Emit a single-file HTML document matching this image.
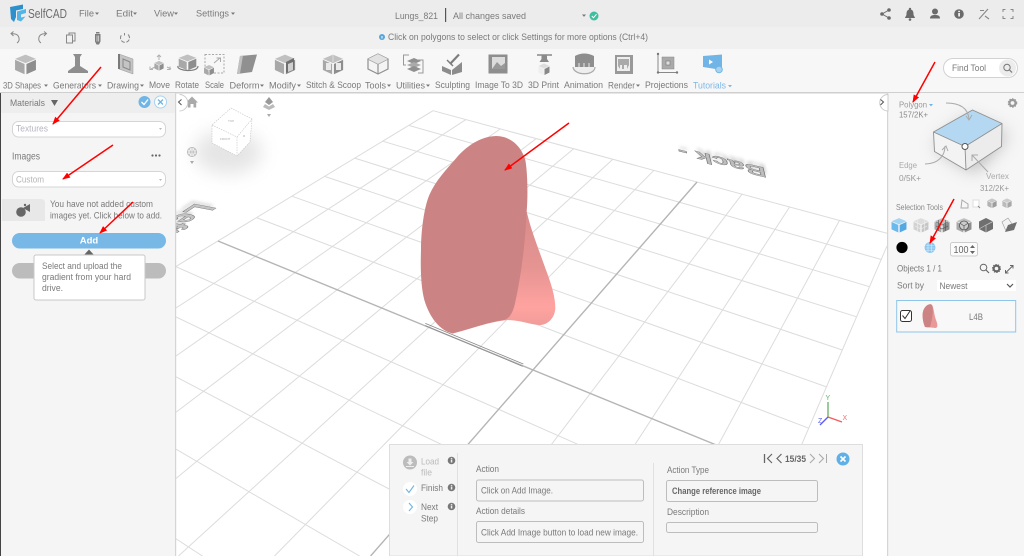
<!DOCTYPE html>
<html><head><meta charset="utf-8"><title>SelfCAD</title>
<style>
html,body{margin:0;padding:0;width:1024px;height:556px;overflow:hidden;background:#fff}
svg{display:block;filter:blur(.35px)}
text{font-family:"Liberation Sans",sans-serif;font-size:9.5px;fill:#7a7a7a}
.m{font-size:9px;fill:#7a7a7a}
.s{fill:#888;stroke:none}
.l{stroke:#dcdcdc;stroke-width:1;fill:none}
.k{stroke:#b5b5b5;stroke-width:1.4;fill:none}
.o{fill:none;stroke:#888;stroke-width:1.2}
</style></head><body>
<svg width="1024" height="556" viewBox="0 0 1024 556" xmlns="http://www.w3.org/2000/svg">
<defs>
<marker id="ah" markerWidth="8" markerHeight="6" refX="7" refY="3" orient="auto" markerUnits="userSpaceOnUse"><path d="M0 0L8 3L0 6Z" fill="#f00"/></marker>
<filter id="b3" x="-100%" y="-100%" width="300%" height="300%"><feGaussianBlur stdDeviation="9"/></filter>
<filter id="b1" x="-30%" y="-30%" width="160%" height="160%"><feGaussianBlur stdDeviation="1.5"/></filter>
<linearGradient id="lg" x1="0" y1="0" x2="0" y2="1"><stop offset="0" stop-color="#d98c8a"/><stop offset=".45" stop-color="#e59492"/><stop offset=".78" stop-color="#ffa3a0"/><stop offset="1" stop-color="#e99997"/></linearGradient>
<clipPath id="cc"><rect x="176" y="93" width="711" height="463"/></clipPath>
<g id="cube"><path d="M0-11L11-6L0-1L-11-6Z" fill="#c0c0c0"/><path d="M-11-5L-1 0V12L-11 7Z" fill="#a8a8a8"/><path d="M11-5L1 0V12L11 7Z" fill="#8e8e8e"/></g>
<g id="caret"><path d="M-2-1H2L0 1.4Z" fill="#777"/></g>
<g id="inf"><circle r="3.8" fill="#777"/><rect x="-.7" y="-1" width="1.5" height="3" fill="#eee"/><rect x="-.7" y="-2.6" width="1.5" height="1" fill="#eee"/></g>
</defs>

<!-- canvas -->
<rect x="176" y="93" width="711" height="463" fill="#fff"/>
<g clip-path="url(#cc)">
<path class="l" d="M433 110.7L887 233.3M408.7 125.4L881.2 259.5M382.7 141.2L869.5 286.7M354.7 158.1L856.6 316.8M324.6 176.4L842.3 350M291.9 196.2L826.5 386.9M256.5 217.6L808.7 428.2M176 266.7L766.1 527.6M176 316.9L673.5 556M176 376.8L516.5 556M176 449.2L359.6 556M176 538.8L202.4 556"/>
<path class="l" d="M433 110.7L176 266.4M465.9 119.6L176 308M500.3 128.9L176 356M536.2 138.6L176 412.2M573.7 148.7L176 478.5M612.9 159.3L178.5 556M653.9 170.3L274.5 556M742.1 194.1L466.5 556M789.6 207L562.4 556M839.5 220.4L658.3 556M887 246L753.8 556"/>
<path class="k" d="M218 241L788.7 474.7M697 182L370.6 556"/>
<!-- back / left labels -->
<g filter="url(#b1)" opacity=".45"><text transform="matrix(-2.45 -.6 -.3 -1.2 766 165)" style="font-size:12px;font-weight:bold;fill:#999">Back -</text></g>
<text transform="matrix(-2.45 -.6 -.3 -1.2 765 168)" style="font-size:12px;font-weight:bold;fill:#bdbdbd;stroke:#6f6f6f;stroke-width:.3">Back -</text>
<g filter="url(#b1)" opacity=".4"><text transform="matrix(-1.9 1.25 -2.6 -.5 194 200)" style="font-size:12px;font-weight:bold;fill:#999">Left</text></g>
<text transform="matrix(-1.9 1.25 -2.6 -.5 196 203)" style="font-size:12px;font-weight:bold;fill:#c4c4c4;stroke:#6f6f6f;stroke-width:.22">Left</text>
<!-- view cube -->
<ellipse cx="228" cy="152" rx="34" ry="22" fill="#bbb" opacity=".38" filter="url(#b3)"/>
<g stroke="#c4c4c4" stroke-width=".6" stroke-dasharray="1.5 1" fill="#fff"><path d="M231 108L252 119L250 142L237 156L212 143L212 125Z"/><path d="M212 125L237 137L252 119M237 137V156" fill="none"/></g>
<text x="228" y="122" style="font-size:3px;fill:#aaa">TOP</text><text x="220" y="140" style="font-size:3px;fill:#aaa">FRONT</text><text x="243" y="137" style="font-size:3px;fill:#aaa">R</text>
<!-- nav icons -->
<path d="M192 96.5L198 102.5H196.2V107.5H193.5V104H190.5V107.5H187.8V102.5H186Z" fill="#aaa"/>
<g><path d="M269 97L273 102L269 105L265 102Z" fill="#999"/><path d="M265 104L269 106.500L273 104L275 107L269 110L263 107Z" fill="#bbb"/><path d="M267 114H271L269 117Z" fill="#aaa"/></g>
<circle cx="192" cy="152" r="4.5" fill="none" stroke="#bbb"/><path d="M187.500 152H196.500M192 147.500V156.500M189 148.500Q192 152 189 155.500M195 148.500Q192 152 195 155.500" stroke="#bbb" stroke-width=".7" fill="none"/><path d="M190 161H194L192 164Z" fill="#aaa"/>
<!-- lung -->
<g transform="translate(176 90) scale(.33333)">
<path d="M1052 365C1065 420 1085 470 1110 540C1125 580 1138 620 1138 655C1136 685 1115 705 1090 705C1060 703 1030 690 995 690C940 695 880 718 825 732L1000 640Z" fill="url(#lg)"/>
<path d="M830 730C790 722 760 680 745 630C735 590 733 540 735 480C735 420 745 350 760 315C780 270 810 240 840 205C870 170 910 140 960 138C1000 138 1035 165 1048 210C1055 250 1056 320 1052 365C1048 460 1035 560 1017 640C1010 670 1000 685 985 690C940 695 880 718 830 730Z" fill="#cc8383"/>
<path d="M748 700L1042 822M748 707L1040 829" stroke="#8a8a8a" stroke-width="2.400" fill="none"/>
</g>
<!-- axes -->
<path d="M828 417V402" stroke="#62b062" stroke-width="1.300"/><path d="M828 417L842 422" stroke="#f25c5c" stroke-width="1.300"/><path d="M828 417L820 425" stroke="#5c5cf2" stroke-width="1.300"/>
<text x="825.500" y="400" style="font-size:7px;fill:#62b062">Y</text><text x="842.500" y="420" style="font-size:7px;fill:#f47070">X</text><text x="818" y="423" style="font-size:7px;fill:#6262f0">Z</text>
</g>

<!-- top bars -->
<rect width="1024" height="27" fill="#ececec"/>
<rect y="27" width="1024" height="22" fill="#f0f0f0"/>
<rect y="49" width="1024" height="43" fill="#f7f7f7"/>
<rect y="92" width="1024" height="1.500" fill="#cfcfcf"/>
<!-- logo -->
<path d="M10 7L23 4.500V9L16 10.500V17L14 22L11 19Z" fill="#2d8fcb"/><path d="M17 11.500L26 9V13L21 14.500V17.500L25.500 16.500L21 21.500L17 20Z" fill="#55b4e6"/>
<text x="28" y="18" textLength="39" lengthAdjust="spacingAndGlyphs" style="font-size:12.500px;fill:#6c6c6c">SelfCAD</text>
<text x="79" y="16.500" textLength="15" lengthAdjust="spacingAndGlyphs">File</text><use href="#caret" x="97" y="13.500"/>
<text x="116" y="16.500" textLength="17" lengthAdjust="spacingAndGlyphs">Edit</text><use href="#caret" x="135" y="13.500"/>
<text x="154" y="16.500" textLength="20" lengthAdjust="spacingAndGlyphs">View</text><use href="#caret" x="176" y="13.500"/>
<text x="196" y="16.500" textLength="33" lengthAdjust="spacingAndGlyphs">Settings</text><use href="#caret" x="233" y="13.500"/>
<text x="395" y="19" textLength="43" lengthAdjust="spacingAndGlyphs">Lungs_821</text>
<rect x="445" y="8" width="1.200" height="14" fill="#555"/>
<text x="453" y="19" textLength="73" lengthAdjust="spacingAndGlyphs">All changes saved</text>
<use href="#caret" x="584" y="15.500"/>
<circle cx="594" cy="16" r="4.500" fill="#3fbf9f"/><path d="M591.800 16L593.500 17.800L596.500 14.200" stroke="#fff" fill="none"/>
<!-- top right icons -->
<g fill="#6a6a6a"><circle cx="882" cy="14" r="1.800"/><circle cx="889" cy="10" r="1.800"/><circle cx="889" cy="18" r="1.800"/><path d="M882 14L889 10M882 14L889 18" stroke="#6a6a6a"/>
<path d="M910 9.500C913 9.500 913.500 12 913.500 14C913.500 16 915 17 915 18H905C905 17 906.500 16 906.500 14C906.500 12 907 9.500 910 9.500Z"/><circle cx="910" cy="19.500" r="1.300"/><circle cx="910" cy="9" r="1.200"/>
<circle cx="935" cy="11.500" r="3"/><path d="M930 18.500C930 15.500 932 15 935 15C938 15 940 15.500 940 18.500Z"/>
<circle cx="959" cy="14" r="4.800"/></g><rect x="958.200" y="13" width="1.800" height="3.500" fill="#eee"/><rect x="958.200" y="10.800" width="1.800" height="1.300" fill="#eee"/>
<path d="M979 19L988 9M980 10.500H984M985 16L989 19" stroke="#888" stroke-width="1.100" fill="none"/>
<path d="M1003 12V9.500H1005.500M1010.500 9.500H1013V12M1013 16V18.500H1010.500M1005.500 18.500H1003V16" stroke="#888" fill="none"/>
<!-- second row -->
<g fill="none" stroke="#888" stroke-width="1"><path d="M17 43A5 5 0 0 0 15 34L11.500 33.500M13.500 31.500L11 33.500L13.500 36"/><path d="M46 33.500L42.500 34A5 5 0 0 0 41 43M44 31.500L46.500 33.500L44 36"/><path d="M66.500 35H72.500V43H66.500ZM69 35V33H75V41H72.500"/><path d="M128 34.500A4.500 4.500 0 1 1 122 34.500M124.500 33V35.500" stroke-dasharray="4 1.500"/></g>
<path d="M95 34H100.500V41.500L99 44.500H96.500L95 41.500Z" fill="#7d7d7d"/><rect x="96" y="32" width="3.500" height="1.500" fill="#7d7d7d"/><path d="M97 35.500V41.500M98.700 35.500V41.500" stroke="#eee" stroke-width=".7"/>
<circle cx="382" cy="37" r="3" fill="#5aa4d8"/><rect x="381.500" y="36" width="1" height="2.500" fill="#fff"/>
<text x="388" y="40" textLength="260" lengthAdjust="spacingAndGlyphs">Click on polygons to select or click Settings for more options (Ctrl+4)</text>

<!-- toolbar icons -->
<use href="#cube" transform="translate(25.500 64) scale(.95 .85)"/>
<g fill="#8e8e8e"><path d="M73 54H82L80 57V68H75V57Z"/><path d="M75 66H80L88 71V73H68V71Z"/></g>
<path d="M119 54L133 59V74L119 69Z" fill="#c4c4c4" stroke="#999" stroke-width=".5"/><path d="M123 59L130 62V70L123 67Z" fill="none" stroke="#888"/><path d="M119 54V69" stroke="#7a7a7a" stroke-width="2"/>
<use href="#cube" transform="translate(159 65.500) scale(.42)"/><path d="M159 55V60M157 57L159 55L161 57M151 69L155 67M167 67L171 69M150 66.500V69.500H153M170 66.500V69.500H167" stroke="#b0b0b0" fill="none"/>
<use href="#cube" transform="translate(187.500 62) scale(.8 .68)"/><path d="M178 66C176 71 198 73 198 66" fill="none" stroke="#7d7d7d" stroke-width="1.200"/>
<rect x="205" y="54.500" width="19" height="18.500" fill="none" stroke="#aaa" stroke-dasharray="2 1.500"/><use href="#cube" transform="translate(209 70) scale(.45)"/><path d="M214 63L220 58M216.500 58H220.500V62" stroke="#aaa" fill="none"/>
<path d="M240 56L257 54.500L252 72L237 74Z" fill="#909090"/><path d="M240 56L243 55.500L240 73.500L237 74Z" fill="#c0c0c0"/>
<use href="#cube" transform="translate(285 64) scale(.92 .85)"/><path d="M286 62L294 58V70L286 73Z" fill="#6f6f6f"/><path d="M288 64L293 62V70L288 72Z" fill="#d0d0d0"/>
<use href="#cube" transform="translate(333 64) scale(.92 .85)"/><rect x="326" y="63" width="5" height="7" fill="#eaeaea"/><rect x="336" y="63" width="5" height="7" fill="#eaeaea"/><path d="M333 55V62" stroke="#ddd"/>
<g fill="#f4f4f4" stroke="#8f8f8f" stroke-width="1.200"><path d="M378 54L388 59V69L378 74L368 69V59Z"/><path d="M368 59L378 64L388 59M378 64V74" fill="none"/></g><path d="M378 54L388 59L378 64L368 59Z" fill="#e2e2e2"/>
<g fill="#909090"><path d="M414 58L421 61L414 64L407 61Z"/><path d="M414 62L421 65L414 68L407 65Z" fill="#aaa"/><path d="M414 66L421 69L414 72L407 69Z"/></g><path d="M409 55H403.500V65H406M418 60H423V73H418" stroke="#999" fill="none"/>
<path d="M442 66L451 70V75L442 71ZM452 70L462 62V72L452 75Z" fill="#8c8c8c"/><path d="M450 64L459 54.500" stroke="#7d7d7d" stroke-width="2.200"/><path d="M447 60L453 66" stroke="#7d7d7d" stroke-width="1.500"/>
<rect x="488.500" y="54.500" width="19" height="19" fill="#8e8e8e"/><rect x="492" y="57" width="13" height="12" fill="#dcdcdc"/><path d="M492 69L497 62L501 66L505 63V69Z" fill="#999"/>
<path d="M537 55H552" stroke="#777" stroke-width="1.300"/><path d="M541.500 55H547V59L549 62H539.500L541.500 59Z" fill="#8a8a8a"/><g transform="translate(544 69) scale(.5)"><path d="M0-11L11-6L0-1L-11-6Z" fill="#ddd"/><path d="M-11-5L-1 0V12L-11 7Z" fill="#eee"/><path d="M11-5L1 0V12L11 7Z" fill="#888"/></g>
<path d="M575 56Q584 51 594 56V68H575Z" fill="#8e8e8e"/><path d="M579 63V69M584 63V69M589 63V69" stroke="#e8e8e8"/><path d="M573 67C574 76 595 76 595 67" fill="#eee" stroke="#aaa" stroke-width="1.200"/>
<rect x="615" y="55" width="18" height="19" fill="#999"/><rect x="617" y="57" width="13" height="14" fill="#eee"/><path d="M618 59H629V65L627 69V65H624V69H622V65H620V69L618 66Z" fill="#aaa"/>
<path d="M658 54V72.500H677" stroke="#888" fill="none"/><rect x="662" y="57" width="12" height="12" fill="#aaa" stroke="#888" stroke-width=".5"/><rect x="666" y="61" width="4" height="4" fill="#ddd" stroke="#777" stroke-width=".6"/><circle cx="658" cy="54" r="1.200" fill="#777"/><circle cx="658" cy="72.500" r="1.200" fill="#777"/><circle cx="677" cy="72.500" r="1.200" fill="#777"/>
<path d="M703 56L722 54.500V70L703 67Z" fill="#71b5e6"/><path d="M709 59.500L713 62L709 64.500Z" fill="#fff"/><circle cx="719" cy="69.500" r="3.300" fill="#a9d2f0" stroke="#71b5e6"/>
<!-- toolbar labels -->
<g>
<text class="m" x="3" y="88.500" textLength="38" lengthAdjust="spacingAndGlyphs">3D Shapes</text><use href="#caret" x="46" y="85.500"/>
<text class="m" x="53" y="88.500" textLength="43" lengthAdjust="spacingAndGlyphs">Generators</text><use href="#caret" x="100" y="85.500"/>
<text class="m" x="107" y="88.500" textLength="32" lengthAdjust="spacingAndGlyphs">Drawing</text><use href="#caret" x="142" y="85.500"/>
<text class="m" x="149" y="88" textLength="21" lengthAdjust="spacingAndGlyphs">Move</text>
<text class="m" x="175" y="88" textLength="24" lengthAdjust="spacingAndGlyphs">Rotate</text>
<text class="m" x="205" y="88" textLength="19" lengthAdjust="spacingAndGlyphs">Scale</text>
<text class="m" x="229.500" y="88.500" textLength="30" lengthAdjust="spacingAndGlyphs">Deform</text><use href="#caret" x="262" y="85.500"/>
<text class="m" x="269" y="88.500" textLength="27" lengthAdjust="spacingAndGlyphs">Modify</text><use href="#caret" x="299" y="85.500"/>
<text class="m" x="306" y="88" textLength="55" lengthAdjust="spacingAndGlyphs">Stitch &amp; Scoop</text>
<text class="m" x="365" y="88.500" textLength="21" lengthAdjust="spacingAndGlyphs">Tools</text><use href="#caret" x="389" y="85.500"/>
<text class="m" x="396" y="88.500" textLength="29" lengthAdjust="spacingAndGlyphs">Utilities</text><use href="#caret" x="428" y="85.500"/>
<text class="m" x="435" y="88" textLength="35" lengthAdjust="spacingAndGlyphs">Sculpting</text>
<text class="m" x="475" y="88" textLength="48" lengthAdjust="spacingAndGlyphs">Image To 3D</text>
<text class="m" x="528" y="88" textLength="31" lengthAdjust="spacingAndGlyphs">3D Print</text>
<text class="m" x="564" y="88" textLength="39" lengthAdjust="spacingAndGlyphs">Animation</text>
<text class="m" x="608" y="88.500" textLength="27" lengthAdjust="spacingAndGlyphs">Render</text><use href="#caret" x="638" y="85.500"/>
<text class="m" x="645" y="88" textLength="43" lengthAdjust="spacingAndGlyphs">Projections</text>
<text class="m" x="693" y="88.500" textLength="33" lengthAdjust="spacingAndGlyphs" style="fill:#7db8e4">Tutorials</text><path d="M728 85H732L730 87.400Z" fill="#7db8e4"/>
</g>
<!-- find tool -->
<rect x="943.500" y="58.500" width="74" height="19" rx="9.500" fill="#fff" stroke="#d2d2d2"/>
<circle cx="1007.500" cy="68" r="8.500" fill="#ececec"/>
<text x="952" y="71" textLength="34" lengthAdjust="spacingAndGlyphs">Find Tool</text>
<circle cx="1007" cy="67.500" r="3.200" fill="none" stroke="#777"/><path d="M1009.500 70L1012 72.500" stroke="#777" stroke-width="1.200"/>

<!-- left panel -->
<rect y="93" width="175" height="463" fill="#f5f5f5"/>
<rect y="93" width="175" height="20" fill="#eeeeee"/>
<rect x="0" y="93" width="1" height="463" fill="#444"/>
<rect x="175" y="93" width="1.200" height="463" fill="#d5d5d5"/>
<text x="10" y="106" textLength="35" lengthAdjust="spacingAndGlyphs">Materials</text>
<path d="M51 100H58L54.500 106Z" fill="#666"/>
<circle cx="144.500" cy="102" r="6" fill="#71b5e6"/><path d="M141.500 102L144 104.500L148 99.500" stroke="#fff" stroke-width="1.300" fill="none"/>
<circle cx="160.500" cy="102" r="6" fill="#fff" stroke="#a9d2f0"/><path d="M158 99.500L163 104.500M163 99.500L158 104.500" stroke="#71b5e6" stroke-width="1.300"/>
<rect x="12.500" y="121.500" width="153" height="15.500" rx="6" fill="#fff" stroke="#d5d5d5"/>
<text x="16" y="131.500" textLength="32" lengthAdjust="spacingAndGlyphs" style="fill:#b5b5c0">Textures</text><path d="M159 128H162L160.500 130Z" fill="#bbb"/>
<text x="12" y="159.500" textLength="28" lengthAdjust="spacingAndGlyphs" style="font-size:10px">Images</text>
<g fill="#666"><circle cx="152.500" cy="155.500" r="1.100"/><circle cx="156" cy="155.500" r="1.100"/><circle cx="159.500" cy="155.500" r="1.100"/></g>
<rect x="12.500" y="171.500" width="153" height="15.500" rx="6" fill="#fff" stroke="#d5d5d5"/>
<text x="16" y="182.500" textLength="28" lengthAdjust="spacingAndGlyphs" style="fill:#b5b5b5">Custom</text><path d="M159 179H162L160.500 181Z" fill="#bbb"/>
<path d="M2 199H41Q45 199 45 203V221H2Z" fill="#e8e8e8"/>
<circle cx="21" cy="212" r="4.800" fill="#666"/><path d="M23 208L30 204V212Z" fill="#666"/><circle cx="25" cy="205" r="1.200" fill="#666"/>
<text x="50" y="207" textLength="103" lengthAdjust="spacingAndGlyphs">You have not added custom</text>
<text x="50" y="218.500" textLength="112" lengthAdjust="spacingAndGlyphs">images yet. Click below to add.</text>
<rect x="12" y="233" width="154" height="15.500" rx="7.700" fill="#78b8e7"/>
<text x="89" y="243.500" text-anchor="middle" style="fill:#fff;font-size:9.500px;font-weight:bold">Add</text>
<rect x="12" y="263" width="154" height="15.500" rx="7.700" fill="#bcbcbc"/>
<path d="M84 255L89 249.500L94 255Z" fill="#666"/>
<rect x="34" y="255" width="111" height="45" rx="2" fill="#fff" stroke="#c8c8c8"/>
<text x="42" y="269" textLength="80" lengthAdjust="spacingAndGlyphs" style="font-size:9px">Select and upload the</text>
<text x="42" y="280" textLength="89" lengthAdjust="spacingAndGlyphs" style="font-size:9px">gradient from your hard</text>
<text x="42" y="291" textLength="21" lengthAdjust="spacingAndGlyphs" style="font-size:9px">drive.</text>

<!-- collapse buttons -->
<path d="M176.500 94.500A8 8 0 0 1 176.500 111" fill="#fff" stroke="#ccc" transform="translate(3 0)"/><path d="M181.500 99.500L178.500 102L181.500 105" stroke="#555" fill="none"/>

<!-- right panel -->
<rect x="888" y="93" width="136" height="463" fill="#f6f6f6"/>
<rect x="887" y="93" width="1.200" height="463" fill="#d5d5d5"/>
<path d="M888 94.500A8 8 0 0 0 888 111Z" fill="#fff" stroke="#ccc"/><path d="M880.500 99.500L883.500 102L880.500 105" stroke="#555" fill="none"/>
<text x="899" y="107.500" textLength="28" lengthAdjust="spacingAndGlyphs" style="font-size:8.500px;fill:#999">Polygon</text><path d="M929 104H933L931 106.400Z" fill="#6eb4e6"/>
<text x="899" y="117.500" textLength="29" lengthAdjust="spacingAndGlyphs" style="font-size:8.500px;fill:#888">157/2K+</text>
<circle cx="1012.500" cy="103" r="3" fill="none" stroke="#999" stroke-width="2.200"/><circle cx="1012.500" cy="103" r="4.300" fill="none" stroke="#999" stroke-width="1" stroke-dasharray="1.500 1.300"/>
<!-- selection box -->
<path d="M934 146L968 118L1008 135L975 172Z" fill="#999" opacity=".7" filter="url(#b3)"/>
<path d="M933.500 132L972.500 110L1002 123.500L965 146.500Z" fill="#b4d8f1"/>
<path d="M933.500 132L965 146.500L966 170L934.500 151.500Z" fill="#f3f3f3"/>
<path d="M965 146.500L1002 123.500L1001.500 146.500L966 170Z" fill="#ececec"/>
<path d="M933.500 132L972.500 110L1002 123.500L1001.500 146.500L966 170L934.500 151.500ZM933.500 132L965 146.500L1002 123.500M965 146.500L966 170" fill="none" stroke="#8f8f8f" stroke-width=".9"/>
<circle cx="965" cy="146.500" r="3" fill="#fff" stroke="#555"/>
<path d="M946 103C960 103 968 108 969 119M966 116L969 120L972 115" fill="none" stroke="#aaa"/>
<path d="M925 164C938 164 945 156 945 146M942 150L946 146L948 151" fill="none" stroke="#aaa"/>
<path d="M988 172L972 155M972 161V155H978" fill="none" stroke="#aaa"/>
<text x="899" y="168" textLength="18" lengthAdjust="spacingAndGlyphs" style="font-size:8.500px;fill:#aaa">Edge</text>
<text x="899" y="181" textLength="22" lengthAdjust="spacingAndGlyphs" style="font-size:8.500px;fill:#999">0/5K+</text>
<text x="986" y="179" textLength="23" lengthAdjust="spacingAndGlyphs" style="font-size:8.500px;fill:#aaa">Vertex</text>
<text x="980" y="191" textLength="29" lengthAdjust="spacingAndGlyphs" style="font-size:8.500px;fill:#999">312/2K+</text>
<text x="896" y="210" textLength="47" lengthAdjust="spacingAndGlyphs" style="font-size:8.500px;fill:#8a8a8a">Selection Tools</text>
<path d="M962 200L968 204V208H961Z" fill="none" stroke="#aaa"/><path d="M973 200H979V207H973Z" fill="#fff" stroke="#ddd"/><path d="M978 206L980 208" stroke="#888"/><use href="#cube" transform="translate(992 203) scale(.42)" opacity=".85"/><use href="#cube" transform="translate(1007 203) scale(.42)" opacity=".75"/>
<!-- select tool icons -->
<g transform="translate(899 225) scale(.68 .62)"><path d="M0-11L11-6L0-1L-11-6Z" fill="#a4d4f4"/><path d="M-11-5L-1 0V12L-11 7Z" fill="#6bb8ec"/><path d="M11-5L1 0V12L11 7Z" fill="#55a8e0"/></g>
<use href="#cube" transform="translate(921 225) scale(.68 .62)" opacity=".45"/><path d="M915 222L921 225L927 222M915 226L921 229L927 226M917.500 220V231M924.500 220V231" stroke="#eee" stroke-width=".6" fill="none"/>
<use href="#cube" transform="translate(942 225) scale(.68 .62)"/><path d="M936 222L942 225L948 222M936 226L942 229L948 226M938.500 220V231M945.500 220V231" stroke="#555" stroke-width=".6" fill="none"/>
<use href="#cube" transform="translate(964 225) scale(.68 .62)"/><circle cx="964" cy="225.500" r="4.500" fill="#ccc" stroke="#555" stroke-width=".8"/><path d="M964 226V230M960.500 223.500L964 226L967.500 223.500" stroke="#555" stroke-width=".7" fill="none"/>
<path d="M986 218L993 221.500V229L986 232.500L979 229V221.500Z" fill="#6f6f6f"/><path d="M986 225V232.500M979 229L986 225L993 221.500" stroke="#ccc" stroke-width=".7" fill="none"/>
<path d="M1002 222L1008 218L1012 224L1006 231Z" fill="#f3f3f3" stroke="#999" stroke-width=".6"/><path d="M1008 225L1017 222L1014 230L1005 232Z" fill="#6f6f6f"/>
<circle cx="902" cy="247.500" r="5.600" fill="#000"/>
<circle cx="930" cy="247.500" r="5.400" fill="#8cc6ee"/><path d="M925.500 245.500H934.500M925.500 248H934.500M925.500 250.500H934.500M928 243V252M931.500 243V252" stroke="#d6ebfa" stroke-width=".6"/>
<rect x="950.500" y="242.500" width="27" height="13.500" rx="2" fill="#fbfbfb" stroke="#ccc"/>
<text x="953.500" y="253" textLength="15" lengthAdjust="spacingAndGlyphs" style="font-size:10px;fill:#666">100</text>
<path d="M970 248L972.500 245L975 248ZM970 251L972.500 254L975 251Z" fill="#666"/>
<text x="897" y="271.500" textLength="45" lengthAdjust="spacingAndGlyphs" style="font-size:9.500px">Objects 1 / 1</text>
<circle cx="983.500" cy="267.500" r="3.300" fill="none" stroke="#666"/><path d="M986 270L989 273" stroke="#666" stroke-width="1.200"/>
<circle cx="996.500" cy="268.500" r="2.800" fill="none" stroke="#666" stroke-width="2"/><circle cx="996.500" cy="268.500" r="4" fill="none" stroke="#666" stroke-dasharray="1.500 1"/>
<path d="M1005.500 273L1013 265.500M1010 265.500H1013V268.500M1005.500 270V273H1008.500" stroke="#666" fill="none"/>
<text x="897" y="288.500" textLength="27" lengthAdjust="spacingAndGlyphs">Sort by</text>
<rect x="937" y="280" width="79" height="11" fill="#fff"/>
<text x="939.500" y="289" textLength="28" lengthAdjust="spacingAndGlyphs">Newest</text>
<path d="M1007 284L1010 287L1013 284" stroke="#555" stroke-width="1.200" fill="none"/>
<rect x="896.700" y="300.500" width="119" height="31.500" fill="#f8f8f8" stroke="#8fc5ea"/>
<rect x="900.500" y="310.500" width="11" height="11" rx="2" fill="#fff" stroke="#333"/><path d="M902.500 315.500L905 318.500L910 311" stroke="#333" fill="none"/>
<path d="M925 327C922 320 922 312 924 309C926 305 930 303 932 305C934 308 934 315 936 320C938 325 938 328 935 328C931 327 928 328 925 327Z" fill="#e99a98"/><path d="M925 327C922 320 922 312 924 309C926 305 930 303 932 305C934 310 932 320 930 327Z" fill="#cc8383"/>
<text x="969" y="320" textLength="14" lengthAdjust="spacingAndGlyphs">L4B</text>

<!-- bottom panel -->
<rect x="389.500" y="444.500" width="473" height="111.500" fill="#f5f5f5" stroke="#dedede"/>
<circle cx="410" cy="462.500" r="7" fill="#bcbcbc"/><path d="M408.500 458.500H411.500V462H413.500L410 465.500L406.500 462H408.500ZM406 466H414V467H406Z" fill="#eee"/>
<text x="421" y="464.500" textLength="18" lengthAdjust="spacingAndGlyphs" style="fill:#bbb">Load</text><text x="421" y="475.500" textLength="11" lengthAdjust="spacingAndGlyphs" style="fill:#bbb">file</text>
<use href="#inf" x="451.500" y="460.500"/><use href="#inf" x="451.500" y="487.500"/><use href="#inf" x="451.500" y="506.500"/>
<circle cx="410" cy="489" r="7" fill="#fff"/><path d="M406 489L409 492.500L414 485.500" stroke="#6eb4e6" stroke-width="1.100" fill="none"/>
<text x="421" y="491" textLength="22" lengthAdjust="spacingAndGlyphs">Finish</text>
<circle cx="410" cy="507" r="7" fill="#fff"/><path d="M409 503L412.500 507L409 511" stroke="#6eb4e6" stroke-width="1.100" fill="none"/>
<text x="421" y="510" textLength="17" lengthAdjust="spacingAndGlyphs">Next</text><text x="421" y="521.500" textLength="17" lengthAdjust="spacingAndGlyphs">Step</text>
<rect x="457" y="453" width="1" height="103" fill="#e0e0e0"/>
<rect x="653" y="463" width="1" height="93" fill="#e0e0e0"/>
<text x="476" y="472" textLength="23" lengthAdjust="spacingAndGlyphs">Action</text>
<rect x="476.500" y="480" width="167" height="21" rx="2" fill="#f5f5f5" stroke="#bdbdbd"/>
<text x="481" y="493.500" textLength="72" lengthAdjust="spacingAndGlyphs">Click on Add Image.</text>
<text x="476" y="514" textLength="49" lengthAdjust="spacingAndGlyphs">Action details</text>
<rect x="476.500" y="521.500" width="167" height="21" rx="2" fill="#f5f5f5" stroke="#bdbdbd"/>
<text x="481" y="535.500" textLength="157" lengthAdjust="spacingAndGlyphs">Click Add Image button to load new image.</text>
<text x="667" y="473" textLength="42" lengthAdjust="spacingAndGlyphs">Action Type</text>
<rect x="666.500" y="480.500" width="151" height="21" rx="2" fill="#f5f5f5" stroke="#bdbdbd"/>
<text x="672" y="494" textLength="89" lengthAdjust="spacingAndGlyphs" style="font-weight:bold;font-size:9px;fill:#666">Change reference image</text>
<text x="667" y="515" textLength="42" lengthAdjust="spacingAndGlyphs">Description</text>
<rect x="666.500" y="522.500" width="151" height="10" rx="2" fill="#f5f5f5" stroke="#bdbdbd"/>
<path d="M764.500 454V463" stroke="#666" stroke-width="1.300"/><path d="M772 454L767.500 458.500L772 463" stroke="#666" stroke-width="1.200" fill="none"/><path d="M781.500 454L777 458.500L781.500 463" stroke="#666" stroke-width="1.200" fill="none"/>
<text x="785" y="462" textLength="21" lengthAdjust="spacingAndGlyphs" style="font-size:9px;font-weight:bold;fill:#666">15/35</text>
<path d="M810 454L814.500 458.500L810 463M819 454L823.500 458.500L819 463" stroke="#aaa" stroke-width="1.100" fill="none"/><path d="M826.500 454V463" stroke="#aaa"/>
<circle cx="843" cy="459" r="6.500" fill="#5fb0e6"/><path d="M840.500 456.500L845.500 461.500M845.500 456.500L840.500 461.500" stroke="#fff" stroke-width="1.600"/>

<!-- red arrows -->
<g stroke="#f00" stroke-width="1.500" fill="none">
<path marker-end="url(#ah)" d="M101 67L53 124"/>
<path marker-end="url(#ah)" d="M113 145L63 179"/>
<path marker-end="url(#ah)" d="M133 202L100 233"/>
<path marker-end="url(#ah)" d="M569 123L505 170"/>
<path marker-end="url(#ah)" d="M935 62L913 102"/>
<path marker-end="url(#ah)" d="M954 199L930 243"/>
</g>
</svg>
</body></html>
